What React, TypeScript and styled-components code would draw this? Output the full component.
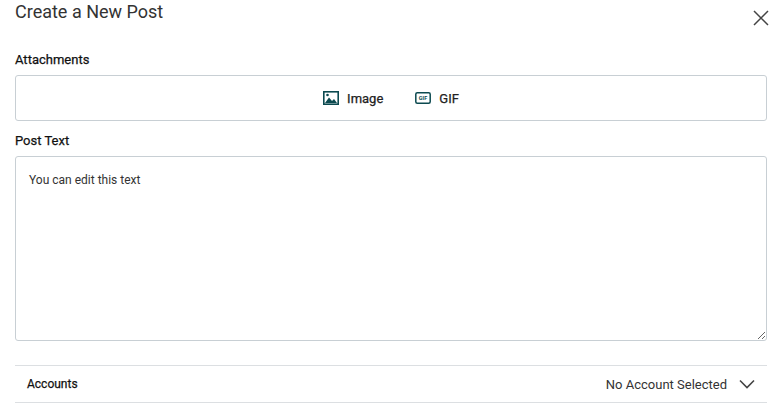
import React from "react";
import styled, { createGlobalStyle } from "styled-components";

const Global = createGlobalStyle`
  body { margin: 0; font-family: Roboto, "Liberation Sans", sans-serif; background: #fff; color: #222; }
  * { box-sizing: border-box; }
`;
const Page = styled.div`padding: 0 12px 0 15px; width: 779px;`;
const Header = styled.div`display: flex; justify-content: space-between; align-items: center; height: 28px; margin-bottom: 24px;`;
const Title = styled.h1`margin: 0; font-size: 18px; font-weight: 400; color: #333; line-height: 24px; margin-top: -4px;`;
const Close = styled.button`border: none; background: none; padding: 0; margin-right: -3px; margin-top: 8px; display: flex; cursor: pointer;`;
const Label = styled.div`font-size: 13px; font-weight: 400; color: #111; height: 16px; margin-bottom: 7px; -webkit-text-stroke: 0.25px #111;`;
const AttachBox = styled.div`height: 46px; border: 1px solid #c8cfd4; border-radius: 3px; display: flex; justify-content: center; align-items: center; gap: 32px; margin-bottom: 12px;`;
const AttachBtn = styled.button`border: none; background: none; display: flex; align-items: center; gap: 8px; font: 400 13px Roboto, sans-serif; -webkit-text-stroke: 0.25px #222; color: #222; padding: 0;`;
const TextArea = styled.textarea`display: block; width: 100%; height: 185px; border: 1px solid #c8cfd4; border-radius: 3px; padding: 16px 13px; font: 400 12px Roboto, sans-serif; color: #333; resize: vertical; outline: none;`;
const Row = styled.div`margin-top: 24px; border-top: 1px solid #dcdfe2; border-bottom: 1px solid #dcdfe2; height: 38px; display: flex; justify-content: space-between; align-items: center; padding: 0 12px 0 12px;`;
const RowLabel = styled.span`font-size: 12px; font-weight: 400; color: #111; -webkit-text-stroke: 0.25px #111;`;
const RowRight = styled.span`display: flex; align-items: center; gap: 12px; font-size: 13px; color: #333;`;

export default function App() {
  return (
    <Page>
      <Global />
      <Header>
        <Title>Create a New Post</Title>
        <Close aria-label="close">
          <svg width="18" height="18" viewBox="0 0 18 18"><path d="M2 2L16 16M16 2L2 16" stroke="#444" strokeWidth="1.5" /></svg>
        </Close>
      </Header>
      <Label>Attachments</Label>
      <AttachBox>
        <AttachBtn>
          <svg width="16" height="14" viewBox="0 0 16 14"><rect x="0.8" y="0.8" width="14.4" height="12.4" fill="none" stroke="#0c4a50" strokeWidth="1.6" /><path d="M2 12L6 6.5L9 10L11 8L14 12Z" fill="#0c4a50" /><circle cx="4.5" cy="4" r="1.3" fill="#0c4a50" /></svg>
          Image
        </AttachBtn>
        <AttachBtn>
          <svg width="16" height="12" viewBox="0 0 16 12"><rect x="0.8" y="0.8" width="14.4" height="10.4" rx="1.5" fill="none" stroke="#0c4a50" strokeWidth="1.5" /><text x="8" y="8.2" fontSize="5.5" fontWeight="700" textAnchor="middle" fill="#0c4a50" fontFamily="Roboto, sans-serif">GIF</text></svg>
          GIF
        </AttachBtn>
      </AttachBox>
      <Label>Post Text</Label>
      <TextArea defaultValue="You can edit this text" />
      <Row>
        <RowLabel>Accounts</RowLabel>
        <RowRight>
          No Account Selected
          <svg width="16" height="10" viewBox="0 0 16 10"><path d="M1 1.5L8 8.5L15 1.5" fill="none" stroke="#444" strokeWidth="1.6" /></svg>
        </RowRight>
      </Row>
    </Page>
  );
}
